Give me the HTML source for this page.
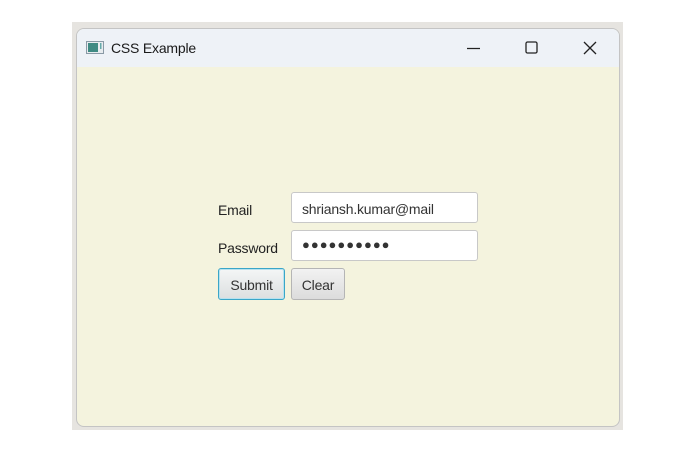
<!DOCTYPE html>
<html><head><style>
body{margin:0;width:700px;height:450px;background:#fff;position:relative;overflow:hidden;font-family:"Liberation Sans",sans-serif;}
.shadow{position:absolute;left:72px;top:22px;width:551px;height:408px;background:#e6e4e0;}
.win{position:absolute;left:76px;top:28px;width:544px;height:399px;border-radius:8px;background:#f4f3de;border:1px solid #c4c4c4;box-sizing:border-box;overflow:hidden;}
.title{position:absolute;left:0;top:0;width:100%;height:38px;background:#eef2f7;}
.title .t{position:absolute;left:34px;top:11px;font-size:14px;color:#1a1a1a;letter-spacing:-0.2px;}
.lbl{position:absolute;font-size:14px;color:#222;letter-spacing:-0.2px;}
.field{position:absolute;left:291px;width:187px;height:31px;box-sizing:border-box;border:1px solid #c8c8c8;border-radius:3px;background:#fff;font-size:14px;color:#333;padding:8px 0 0 10px;letter-spacing:-0.2px;}
.btn{position:absolute;top:268px;height:32px;box-sizing:border-box;border-radius:3px;font-size:14px;color:#333;text-align:center;padding-top:8px;background:linear-gradient(#f2f2f2,#dcdcdc);border:1px solid #b5b5b5;letter-spacing:-0.2px;}
</style></head><body>
<div class="shadow"></div>
<div class="win">
<div class="title">
<svg style="position:absolute;left:9px;top:12px" width="18" height="13"><rect x="0.5" y="0.5" width="17" height="12" fill="#e8ecef" stroke="#8a9aa6"/><rect x="2" y="2" width="10" height="9" fill="#3f8a83"/><rect x="14" y="2" width="1.5" height="6" fill="#6aa"/></svg>
<span class="t">CSS Example</span>
<svg style="position:absolute;left:390px;top:13px" width="14" height="14"><line x1="0" y1="6.5" x2="13" y2="6.5" stroke="#222" stroke-width="1.2"/></svg>
<svg style="position:absolute;left:448px;top:12px" width="14" height="14"><rect x="1" y="1" width="11" height="11" rx="1.5" fill="none" stroke="#222" stroke-width="1.3"/></svg>
<svg style="position:absolute;left:506px;top:12px" width="14" height="14"><path d="M1 1L13 13M13 1L1 13" stroke="#222" stroke-width="1.3"/></svg>
</div>
</div>
<div class="lbl" style="left:218px;top:202px">Email</div>
<div class="lbl" style="left:218px;top:240px">Password</div>
<div class="field" style="top:192px">shriansh.kumar@mail</div>
<div class="field" style="top:230px;font-size:13px;letter-spacing:1px;padding-top:6px;color:#333">●●●●●●●●●●</div>
<div class="btn" style="left:218px;width:67px;border:1px solid #3aa6c8;box-shadow:inset 0 0 0 1px #b8e2ef;background:linear-gradient(#f4f6f6,#dcdfe0)">Submit</div>
<div class="btn" style="left:291px;width:54px">Clear</div>
</body></html>
